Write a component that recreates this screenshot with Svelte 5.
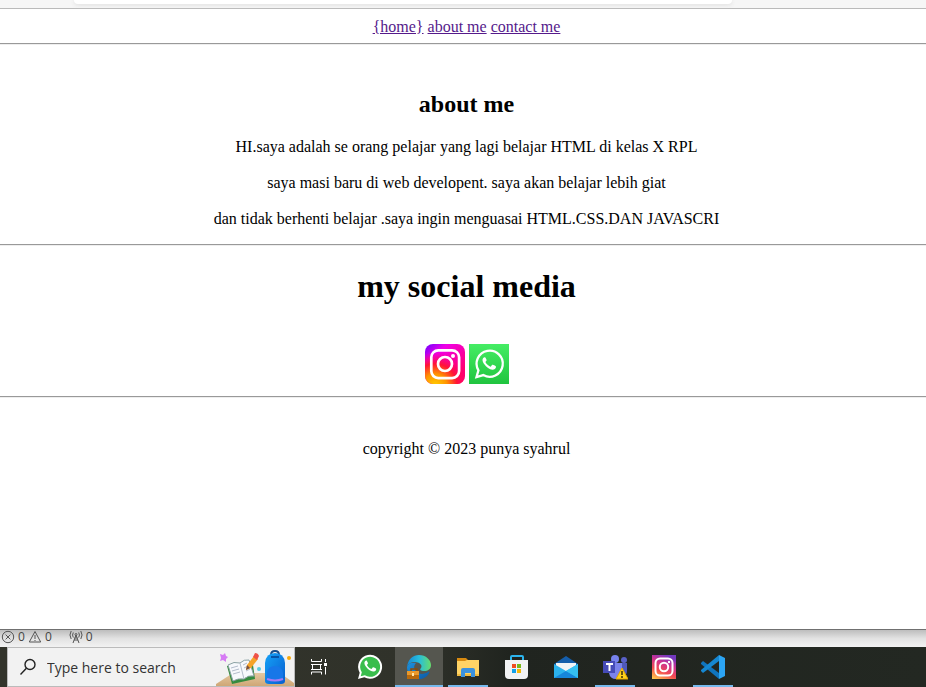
<script>
  const lines = [
    'HI.saya adalah se orang pelajar yang lagi belajar HTML di kelas X RPL',
    'saya masi baru di web developent. saya akan belajar lebih giat',
    'dan tidak berhenti belajar .saya ingin menguasai HTML.CSS.DAN JAVASCRI'
  ];
  const apps = [
    { id: 'whatsapp', name: 'WhatsApp' },
    { id: 'edge', name: 'Microsoft Edge', active: true, open: true },
    { id: 'files', name: 'File Explorer', open: true },
    { id: 'store', name: 'Microsoft Store' },
    { id: 'mail', name: 'Mail' },
    { id: 'teams', name: 'Microsoft Teams', open: true },
    { id: 'instagram', name: 'Instagram' },
    { id: 'code', name: 'Visual Studio Code', open: true }
  ];
</script>

{#snippet phone(fill)}
  <path d="M8.3 6.5c-.3-.6-.6-.6-.9-.6-.8 0-1.9 1-1.9 2.6 0 1.700 1.200 3.300 1.500 3.700 2 3 5 5 7.600 5.200 1.600.1 3-1 3.200-2 .1-.6.1-1-.1-1.200-.6-.4-2.200-1.200-2.700-1.300-.4-.1-.6 0-.8.3l-1 1.200c-.2.3-.5.3-.8.1-2-.9-3.300-2.300-4.100-3.800-.2-.3 0-.6.2-.8l.7-.9c.2-.3.1-.5 0-.7z" {fill} />
{/snippet}

<div class="screen">
  <header class="toolbar"><div class="address"></div></header>

  <main>
    <nav>
      <a href="#home">&#123;home&#125;</a>
      <a href="#about">about me</a>
      <a href="#contact">contact me</a>
    </nav>
    <hr />
    <section id="about">
      <h2>about me</h2>
      {#each lines as line}
        <p>{line}</p>
      {/each}
    </section>
    <hr />
    <section id="contact">
      <h1>my social media</h1>
      <div class="social">
        <a href="#instagram" aria-label="Instagram">
          <svg width="40" height="40" viewBox="0 0 40 40">
            <defs>
              <linearGradient id="igb" x1="0" y1="0" x2=".75" y2=".8">
                <stop offset="0" stop-color="#6b00ff" />
                <stop offset=".35" stop-color="#f000e8" />
                <stop offset="1" stop-color="#ff0074" />
              </linearGradient>
              <radialGradient id="igw" cx=".25" cy="1.05" r=".85">
                <stop offset="0" stop-color="#ffd000" />
                <stop offset=".35" stop-color="#ff9500" />
                <stop offset=".65" stop-color="#ff1535" />
                <stop offset="1" stop-color="#ff0074" stop-opacity="0" />
              </radialGradient>
            </defs>
            <rect width="40" height="40" rx="8" fill="url(#igb)" />
            <rect width="40" height="40" rx="8" fill="url(#igw)" />
            <g fill="none" stroke="#fff" stroke-width="2.700">
              <rect x="6.300" y="6.300" width="27.800" height="27.800" rx="7" />
              <circle cx="20" cy="20" r="7" />
            </g>
            <circle cx="28" cy="12" r="2" fill="#fff" />
          </svg>
        </a>
        <a href="#whatsapp" aria-label="WhatsApp">
          <svg width="40" height="40" viewBox="0 0 40 40">
            <defs>
              <linearGradient id="wag" x1="0" y1="0" x2="0" y2="1">
                <stop offset="0" stop-color="#45ed64" />
                <stop offset="1" stop-color="#20c43f" />
              </linearGradient>
            </defs>
            <rect width="40" height="40" fill="url(#wag)" />
            <path d="M7.500 33l1.900-6.700a13.100 13.100 0 1 1 4.900 4.800z" fill="none" stroke="#fff" stroke-width="2.300" />
            <g transform="translate(7.500 6.700) scale(1.090)">{@render phone('#fff')}</g>
          </svg>
        </a>
      </div>
    </section>
    <hr />
    <footer>copyright © 2023 punya syahrul</footer>
  </main>

  <div class="status">
    <svg width="14" height="14" viewBox="0 0 14 14"><circle cx="7" cy="7" r="5.700" /><path d="M4.600 4.600l4.800 4.800M9.400 4.600L4.600 9.400" /></svg>
    <span>0</span>
    <svg width="14" height="14" viewBox="0 0 14 14"><path d="M7 1.500L12.700 12H1.300zM7 5v4M7 10v1" /></svg>
    <span class="warn">0</span>
    <svg width="14" height="14" viewBox="0 0 14 14"><path d="M4 13l3-8 3 8M5 10h4M5.500 8h3M4.300 2.500Q2.800 5 4.300 7.500M2.200 1Q-.3 5 2.200 9M9.700 2.500Q11.200 5 9.700 7.500M11.800 1Q14.300 5 11.800 9" /><circle cx="7" cy="4.500" r="1" /></svg>
    <span>0</span>
  </div>

  <div class="taskbar">
    <label class="search">
      <svg width="18" height="18" viewBox="0 0 18 18"><circle cx="11" cy="6.500" r="5" /><path d="M7.400 10.200L1.500 16.500" /></svg>
      <input type="text" placeholder="Type here to search" aria-label="Type here to search" />
      <svg class="art" width="78" height="38" viewBox="0 0 78 38" aria-hidden="true">
        <defs>
          <linearGradient id="desk" x1="0" y1="0" x2="0" y2="1"><stop offset="0" stop-color="#e5c7a0" /><stop offset="1" stop-color="#cfa776" /></linearGradient>
          <linearGradient id="bag" x1="0" y1="0" x2="1" y2="1"><stop offset="0" stop-color="#16a2f7" /><stop offset="1" stop-color="#075ed0" /></linearGradient>
        </defs>
        <path d="M0 38v-2l17-11h47l14 10v3z" fill="url(#desk)" />
        <path d="M4 6l3 1 2-2 1 3 2 1-2 2v3l-3-2-3 1 1-3z" fill="#d67bf4" />
        <path d="M11 18l5 18 23-5-2-14z" fill="#348b3e" />
        <path d="M12 17q6-4 12-2 4-4 9-3l5 16q-6-1-10 3-6-1-11 2z" fill="#f6f8fc" stroke="#8ba2a4" />
        <path d="M24 15l4 16M15 20l7-2M16 23l7-2M17 26l7-2M27 17l4-2M28 20l4-2M30 23l4-2" stroke="#b3bccb" fill="none" />
        <path d="M30 22l1-5 7-9 4 3-7 9z" fill="#f6a328" />
        <path d="M37 9l2-4q3 0 4 3l-2 4z" fill="#ee5248" />
        <path d="M30 22l1-5 3 3z" fill="#775044" />
        <circle cx="43" cy="21" r="2" fill="#58cbe1" />
        <path d="M55 7q0-4 4-4t4 4" fill="none" stroke="#164a89" stroke-width="2" />
        <path d="M49 33V15Q50 5 59 5t10 10v18q0 3-4 3H53q-4 0-4-3z" fill="url(#bag)" />
        <path d="M51 31v-6q1-7 8-7t8 7v6q-8 3-16 0z" fill="#1777e8" />
        <path d="M51 31q8 3 16 0" fill="none" stroke="#a47bf4" stroke-width="2" />
        <path d="M55 9h8" stroke="#0753a7" stroke-width="2" />
        <circle cx="73" cy="10" r="2" fill="#f8a90a" />
      </svg>
    </label>

    <button class="taskview" aria-label="Task View">
      <svg width="20" height="20" viewBox="0 0 20 20" fill="none" stroke="#fff">
        <path d="M1.500 2v2.500h10V2M1.500 18v-2.500h10V18M2.500 7v6h8V7zM15.500 2v3M15.500 10v8M1 6.500h11M1 13.500h11" stroke="none" />
        <path d="M1.500 2v2.500h10V2M1.500 17.500V15h10v2.500M2.500 7.500h8v5h-8zM1 7.500h11M1 12.500h11M15.500 2v3M15.500 10v7.500" />
        <path d="M14 6h3v3h-3z" fill="#fff" stroke="none" />
      </svg>
    </button>

    {#each apps as app}
      <button class:active={app.active} class:open={app.open} aria-label={app.name}>
        <svg width="26" height="26" viewBox="0 0 26 26">
          {#if app.id === 'whatsapp'}
            <path d="M1 25l1.700-6.200A12 12 0 1 1 7.300 23.300z" fill="#fff" />
            <path d="M3.700 22.300l1.100-4A10 10 0 1 1 7.900 21.300z" fill="#39bd4c" />
            <g transform="translate(2.200 1) scale(.95)">{@render phone('#fff')}</g>
          {:else if app.id === 'edge'}
            <defs>
              <linearGradient id="edgeTop"><stop offset="0" stop-color="#1686d4" /><stop offset=".5" stop-color="#26bddd" /><stop offset="1" stop-color="#67dc6c" /></linearGradient>
              <linearGradient id="edgeLow" x1="0" y1="0" x2="1" y2="1"><stop offset="0" stop-color="#1c91df" /><stop offset="1" stop-color="#0c59a4" /></linearGradient>
            </defs>
            <path d="M1 13c1-4 5-5 9-4-3 3-2 7 1 9 3 3 8 2 11 0 1-1 2 0 1 1-2 4-6 6-10 6C6 25 1 20 1 13z" fill="url(#edgeLow)" />
            <path d="M1 13C2 5 7 1 13 1c7 0 12 5 12 10 0 4-3 6-7 6-3 0-5-1-3-3 2-3-2-6-6-6-4 0-7 2-8 5z" fill="url(#edgeTop)" />
            <path d="M5 17v-2h6v2" fill="none" stroke="#8b4b08" stroke-width="1.500" />
            <path d="M1 17h12v8H1z" fill="#b9690b" /><path d="M1 17h12v4H1z" fill="#e9982b" />
            <path d="M6 19h2v3H6z" fill="#ffe3a5" />
          {:else if app.id === 'files'}
            <path d="M2 4h9l2 2h11v3H2z" fill="#d88a10" />
            <path d="M2 7h8l2-1h12v16H2z" fill="#ffd365" />
            <path d="M2 20h22v2H2z" fill="#efb83f" />
            <path d="M6 23v-7q0-2 2-2h10q2 0 2 2v7h-4v-4h-6v4z" fill="#3b91dd" />
          {:else if app.id === 'store'}
            <path d="M7 7V3q0-1 1-1h10q1 0 1 1v4" fill="none" stroke="#2cb4ed" stroke-width="2" />
            <path d="M1 6h23v15q0 4-4 4H5q-4 0-4-4z" fill="#f2f3f4" />
            <path d="M8 10h4v4H8z" fill="#f04d22" /><path d="M13 10h4v4h-4z" fill="#79b91b" />
            <path d="M8 15h4v4H8z" fill="#13a1e9" /><path d="M13 15h4v4h-4z" fill="#f7b707" />
          {:else if app.id === 'mail'}
            <path d="M1 10L13 2l12 8v4H1z" fill="#155eab" />
            <path d="M3 9h20v8H3z" fill="#f1f3f6" />
            <path d="M1 10l12 7 12-7v14H1z" fill="#2bb2ed" />
            <path d="M1 24l12-7 12 7z" fill="#1686da" />
            <path d="M25 10v14L13 17z" fill="#35c0f1" />
          {:else if app.id === 'teams'}
            <circle cx="13" cy="5" r="4" fill="#7782ed" /><circle cx="22" cy="6" r="3" fill="#5961c8" />
            <path d="M17 9h8v8q0 5-5 5h-3z" fill="#5059b9" />
            <path d="M7 9h13v10q0 6-6 6t-7-6z" fill="#7b83eb" />
            <path d="M1 7h12v12H1z" fill="#464bb8" />
            <path d="M4 10h7M7.500 10v7" stroke="#fff" stroke-width="2" />
            <path d="M20 14l6 11H14z" fill="#ffd11c" stroke="#e2a700" stroke-linejoin="round" />
            <path d="M20 17v4M20 22v2" stroke="#382c0d" stroke-width="1.500" />
          {:else if app.id === 'instagram'}
            <defs>
              <linearGradient id="igTask" x1=".15" y1="1" x2=".6" y2="0"><stop offset="0" stop-color="#ffc34c" /><stop offset=".35" stop-color="#f44d51" /><stop offset=".7" stop-color="#cb3293" /><stop offset="1" stop-color="#7439be" /></linearGradient>
            </defs>
            <path d="M1 1h24v24H1z" fill="url(#igTask)" />
            <g fill="none" stroke="#fff" stroke-width="2"><rect x="4.500" y="4.500" width="17" height="17" rx="4.500" /><circle cx="13" cy="13" r="4.200" /></g>
            <circle cx="18" cy="8" r="1.200" fill="#fff" />
          {:else}
            <path d="M1 9l2-2 16 12v6L1 10z" fill="#1074bd" />
            <path d="M1 17l2 2L19 7V1L1 16z" fill="#1687d1" />
            <path d="M19 1l6 3v18l-6 3z" fill="#2ca5f4" />
          {/if}
        </svg>
      </button>
    {/each}
  </div>
</div>

<style>
  :global(body) { margin: 0; background: #fff; }
  .screen {
    display: flex;
    flex-direction: column;
    min-height: 100vh;
    overflow: hidden;
    color: #000;
    font-family: "Liberation Serif", "Times New Roman", serif;
    font-size: 16px;
    line-height: 18px;
  }
  .toolbar {
    height: 8px;
    padding: 0 21% 0 8%;
    border-bottom: 1px solid #bababa;
    background: #f6f6f6;
  }
  .address {
    height: 4px;
    border-radius: 0 0 16px 16px;
    background: #fff;
    box-shadow: 0 1px 4px #ddd;
  }
  main { flex: 1; text-align: center; }
  nav, section, footer { padding-left: 7px; }
  nav { padding-top: 9px; padding-bottom: 7px; }
  nav a { color: #551a8b; }
  hr {
    height: 1px;
    margin: 0;
    border: 0;
    border-top: 1px solid #999;
    background: #eee;
  }
  h1, h2, p { margin: 0; }
  #about { padding-top: 45px; padding-bottom: 16px; }
  h2 { padding-bottom: 2px; font-size: 24px; line-height: 28px; }
  p { margin-top: 18px; }
  #contact { padding-top: 22px; padding-bottom: 12px; }
  h1 { font-size: 32px; line-height: 36px; }
  .social { display: flex; justify-content: center; gap: 4px; padding-top: 40px; }
  .social svg { display: block; }
  footer { padding-top: 42px; }
  .status {
    display: flex;
    align-items: flex-start;
    gap: 3px;
    height: 17px;
    padding-left: 1px;
    border-top: 1px solid #707070;
    background: linear-gradient(#bdbdbd, #e2e2e2 50%, #f2f2f2);
    color: #444;
    font: 12px/14px "Open Sans", "Noto Sans", sans-serif;
  }
  .status svg { fill: none; stroke: #555; }
  .status .warn { margin-right: 14px; }
  .taskbar {
    display: flex;
    gap: 1px;
    height: 40px;
    padding-left: 7px;
    background: linear-gradient(90deg, #33342b, #30322a 45%, #20241f 55%, #232822);
  }
  .search {
    display: flex;
    align-items: center;
    box-sizing: border-box;
    width: 288px;
    padding-left: 11px;
    border: 1px solid #bbb;
    background: #f2f2f2;
  }
  .search svg { flex: none; fill: none; stroke: #222; stroke-width: 1.400; }
  .search .art { stroke: none; stroke-width: 1; }
  input {
    flex: 1;
    min-width: 0;
    padding: 2px 0 0 10px;
    border: 0;
    outline: 0;
    background: transparent;
    color: #333;
    font: 14px/20px "Open Sans", "Noto Sans", sans-serif;
  }
  input::placeholder { color: #333; opacity: 1; }
  button {
    position: relative;
    display: flex;
    align-items: center;
    justify-content: center;
    width: 48px;
    padding: 0;
    border: 0;
    background: transparent;
  }
  .taskview { margin-right: 1px; }
  .active { background: #55564f; }
  .open::after {
    content: "";
    position: absolute;
    right: 4px;
    bottom: 0;
    left: 4px;
    height: 2px;
    background: #76b9ed;
  }
  .active::after { right: 0; left: 0; }
</style>
